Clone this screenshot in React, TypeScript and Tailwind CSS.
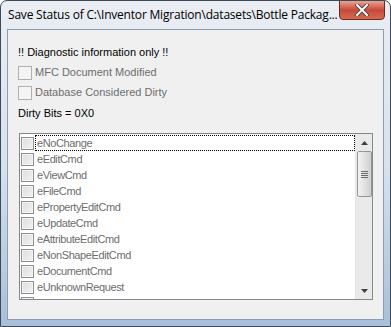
const items = [
  'eNoChange',
  'eEditCmd',
  'eViewCmd',
  'eFileCmd',
  'ePropertyEditCmd',
  'eUpdateCmd',
  'eAttributeEditCmd',
  'eNonShapeEditCmd',
  'eDocumentCmd',
  'eUnknownRequest',
  'eUnspecifiedEditCmd',
];

function Check({ small }: { small?: boolean }) {
  return (
    <span
      className={
        small
          ? 'block w-[13px] h-[13px] shrink-0 border border-[#8e8f8f] bg-gradient-to-br from-[#dcdcdc] to-[#f4f4f4] shadow-[inset_0_0_0_1px_#f4f4f4]'
          : 'block w-[14px] h-[14px] shrink-0 border border-[#b1b1b1] bg-[#f4f4f4]'
      }
    />
  );
}

export default function App() {
  return (
    <div
      className="w-[391px] h-[327px] flex flex-col border border-[#3c4a5a] rounded-t-[7px] bg-gradient-to-b from-[#eaeef3] via-[#d7e2ee] to-[#a8bfd9] overflow-hidden"
      style={{ fontFamily: '"Liberation Sans", Arial, sans-serif' }}
    >
      <div className="h-[28px] shrink-0 flex items-start justify-between pl-[7px]">
        <span
          className="pt-[7px] text-[12px] leading-[14px] tracking-[-0.2px] text-black whitespace-nowrap overflow-hidden"
          style={{ fontFamily: '"Open Sans", sans-serif' }}
        >
          Save Status of C:\Inventor Migration\datasets\Bottle Packag...
        </span>
        <div className="shrink-0 mr-[5px] mt-[-1px] w-[46px] h-[20px] rounded-b-[4px] border border-[#6b2a22] bg-gradient-to-b from-[#e8a493] via-[#c7483a] to-[#d26a4f] flex items-center justify-center">
          <svg width="14" height="12" viewBox="0 0 14 12">
            <path d="M2 1 L12 11 M12 1 L2 11" stroke="#3a3a3a" strokeWidth="3.6" strokeLinecap="square" />
            <path d="M2 1 L12 11 M12 1 L2 11" stroke="#ffffff" strokeWidth="2" strokeLinecap="square" />
          </svg>
        </div>
      </div>
      <div className="mx-[6px] h-[291px] border border-[#8d9cae] bg-[#f0f0f0] flex flex-col pl-[10px] pr-[10px] text-[11px]">
        <div className="mt-[15px] h-[14px] leading-[14px] text-black">!! Diagnostic information only !!</div>
        <div className="mt-[6px] h-[15px] flex items-center gap-[3px] text-[#6d6d6d]">
          <Check />
          <span>MFC Document Modified</span>
        </div>
        <div className="mt-[5px] h-[15px] flex items-center gap-[3px] text-[#6d6d6d]">
          <Check />
          <span>Database Considered Dirty</span>
        </div>
        <div className="mt-[6px] h-[14px] leading-[14px] text-black">Dirty Bits = 0X0</div>
        <div className="mt-[13px] ml-[1px] w-[354px] h-[167px] border border-[#828790] bg-white flex">
          <div className="flex-1 overflow-hidden pt-[1px] pl-[1px]">
            {items.map((t, i) => (
              <div key={t} className="h-[16px] flex items-center gap-[1px] text-[#6d6d6d] tracking-[-0.4px]">
                <Check small />
                <span
                  className={
                    i === 0
                      ? 'flex-1 h-[16px] leading-[14px] pl-[1px] border border-dotted border-black'
                      : 'flex-1 h-[16px] leading-[16px] pl-[2px]'
                  }
                >
                  {t}
                </span>
              </div>
            ))}
          </div>
          <div className="w-[17px] shrink-0 bg-[#eaeaea] border-l border-[#e4e4e4] flex flex-col items-center">
            <div className="h-[17px] w-full flex items-center justify-center">
              <svg width="7" height="4" viewBox="0 0 7 4"><path d="M0 4 L3.5 0 L7 4 Z" fill="#404040" /></svg>
            </div>
            <div className="w-[15px] h-[46px] rounded-[2px] border border-[#959595] bg-gradient-to-r from-[#f2f2f2] via-[#e2e2e2] to-[#cfcfcf] flex flex-col items-center justify-center gap-[1px]">
              <span className="block w-[7px] h-[1px] bg-[#6a6a6a]" />
              <span className="block w-[7px] h-[1px] bg-[#6a6a6a]" />
              <span className="block w-[7px] h-[1px] bg-[#6a6a6a]" />
              <span className="block w-[7px] h-[1px] bg-[#6a6a6a]" />
            </div>
            <div className="flex-1" />
            <div className="h-[17px] w-full flex items-center justify-center">
              <svg width="7" height="4" viewBox="0 0 7 4"><path d="M0 0 L7 0 L3.5 4 Z" fill="#404040" /></svg>
            </div>
          </div>
        </div>
      </div>
    </div>
  );
}
